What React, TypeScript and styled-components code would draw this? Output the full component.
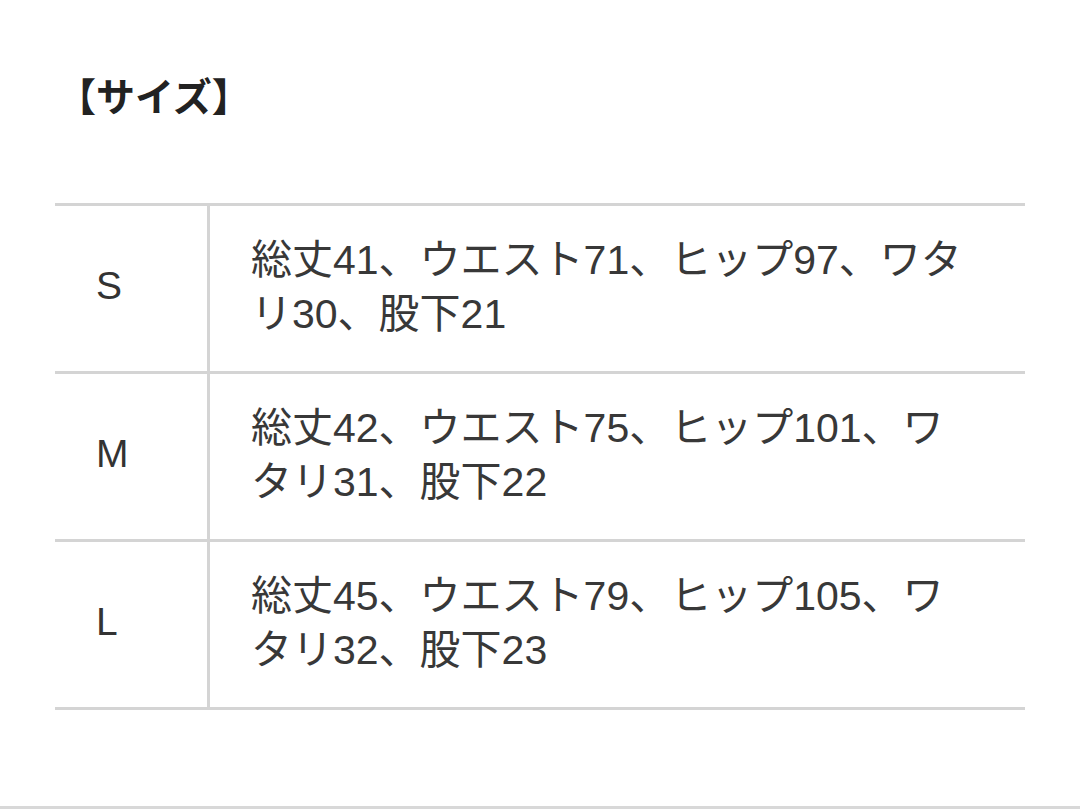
import styled, { createGlobalStyle } from "styled-components";

const GlobalStyle = createGlobalStyle`
  html, body {
    margin: 0;
    padding: 0;
    background: #ffffff;
  }
  body {
    font-family: "Liberation Sans", "Noto Sans CJK JP", sans-serif;
    color: #333333;
  }
`;

const Page = styled.div`
  width: 1080px;
  height: 809px;
  box-sizing: border-box;
  display: flex;
  flex-direction: column;
  background: #ffffff;
`;

const Content = styled.div`
  padding: 63px 55px 0 55px;
`;

const Title = styled.h2`
  margin: 0 0 0 2px;
  font-family: "Noto Sans CJK JP", sans-serif;
  font-size: 39px;
  font-weight: 700;
  line-height: 62px;
  color: #222222;
`;

const SizeTable = styled.div`
  margin-top: 78px;
  width: 970px;
  border-bottom: 3px solid #d4d4d4;
`;

const Row = styled.div`
  display: grid;
  grid-template-columns: 155px 1fr;
  height: 168px;
  box-sizing: border-box;
  border-top: 3px solid #d4d4d4;
`;

const SizeCell = styled.div`
  display: flex;
  align-items: center;
  padding: 0 0 6px 41px;
  border-right: 3px solid #d4d4d4;
  font-size: 39px;
  color: #333333;
`;

const DetailCell = styled.div`
  display: flex;
  align-items: center;
  padding: 0 50px 4px 41px;
  font-size: 41px;
  line-height: 54px;
  color: #383838;
`;

const BottomRule = styled.div`
  margin-top: auto;
  height: 3px;
  background: #d8d8d8;
`;

const rows = [
  { size: "S", text: "総丈41、ウエスト71、ヒップ97、ワタリ30、股下21" },
  { size: "M", text: "総丈42、ウエスト75、ヒップ101、ワタリ31、股下22" },
  { size: "L", text: "総丈45、ウエスト79、ヒップ105、ワタリ32、股下23" },
];

const App = () => {
  return (
    <Page>
      <GlobalStyle />
      <Content>
        <Title>【サイズ】</Title>
        <SizeTable>
          {rows.map((r) => (
            <Row key={r.size}>
              <SizeCell>{r.size}</SizeCell>
              <DetailCell>{r.text}</DetailCell>
            </Row>
          ))}
        </SizeTable>
      </Content>
      <BottomRule />
    </Page>
  );
};

export default App;
